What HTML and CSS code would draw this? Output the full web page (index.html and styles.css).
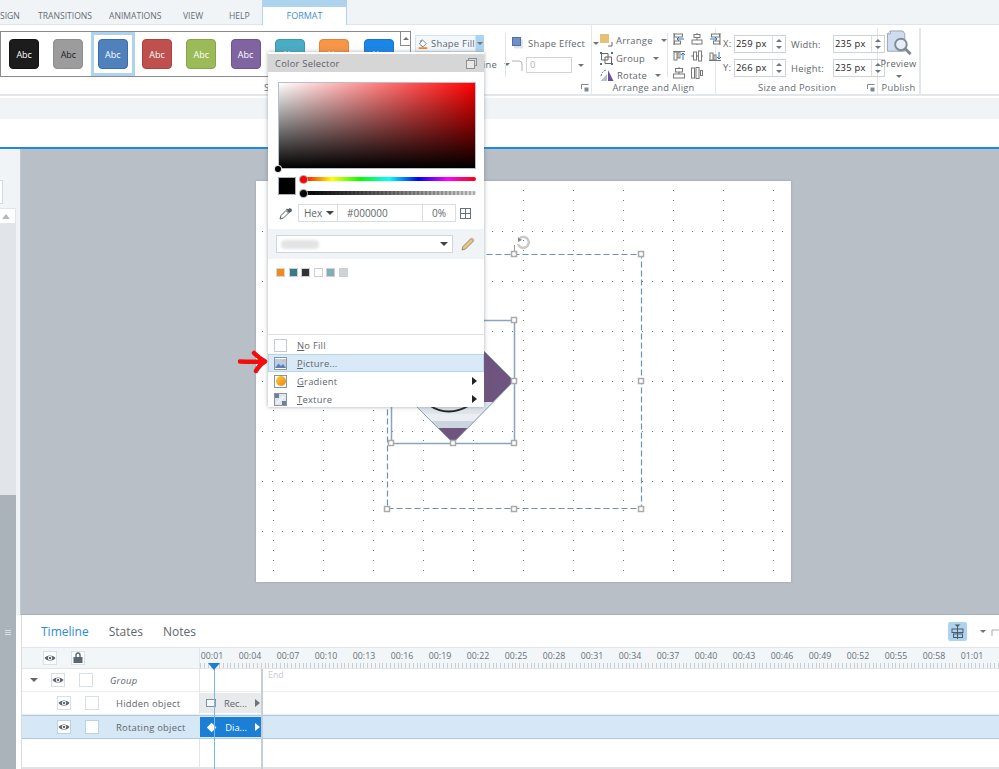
FILE: index.html
```html
<!DOCTYPE html>
<html lang="en">
<head>
<meta charset="utf-8">
<title>Format ribbon with Color Selector</title>
<link rel="stylesheet" href="styles.css">
</head>
<body>
<svg class="defs" width="0" height="0" aria-hidden="true">
  <defs>
    <symbol id="eye" viewBox="0 0 12 12"><path d="M0.5 6C2.5 2.6 9.5 2.6 11.5 6C9.5 9.4 2.5 9.4 0.5 6Z" fill="#5b6670"/><circle cx="6" cy="6" r="2.2" fill="#fff"/><circle cx="6" cy="6" r="1.2" fill="#5b6670"/></symbol>
    <symbol id="launcher" viewBox="0 0 8 8"><path d="M0.5 5V0.5H7.5" fill="none" stroke="#888"/><rect x="3.5" y="3.5" width="4" height="4" fill="#7d8a96"/></symbol>
  </defs>
</svg>
<div class="app">
  <nav class="tabs">
    <span class="tab tab-sign">SIGN</span>
    <span class="tab tab-trans">TRANSITIONS</span>
    <span class="tab tab-anim">ANIMATIONS</span>
    <span class="tab tab-view">VIEW</span>
    <span class="tab tab-help">HELP</span>
    <span class="tab tab-format">FORMAT</span>
  </nav>

  <section class="ribbon">
    <div class="group g-styles">
      <div class="group-body">
        <div class="gallery">
          <div class="style-item"><span class="chip c-black">Abc</span></div>
          <div class="style-item"><span class="chip c-gray">Abc</span></div>
          <div class="style-item selected"><span class="chip c-blue">Abc</span></div>
          <div class="style-item"><span class="chip c-red">Abc</span></div>
          <div class="style-item"><span class="chip c-green">Abc</span></div>
          <div class="style-item"><span class="chip c-purple">Abc</span></div>
          <div class="style-item"><span class="chip c-teal">Abc</span></div>
          <div class="style-item"><span class="chip c-orange">Abc</span></div>
          <div class="style-item"><span class="chip c-azure">Abc</span></div>
          <div class="gallery-scroll"><span class="caret-up"></span></div>
        </div>
        <div class="fill-col">
          <div class="fill-row">
            <div class="fill-btn">
              <svg width="14" height="14" viewBox="0 0 14 14"><path d="M6 1L11.5 6.5L7 11L2 7Z" fill="#fff" stroke="#555"/><path d="M4 4V1.5" stroke="#555"/><rect x="1" y="11.5" width="12" height="2.5" fill="#f08a32"/></svg>
              <span>Shape Fill</span>
            </div>
            <div class="fill-drop"><span class="caret"></span></div>
          </div>
          <div class="outline-row"><span>Shape Outline</span><span class="caret"></span></div>
        </div>
        <div class="vsep"></div>
        <div class="effect-col">
          <div class="effect-row">
            <svg width="11" height="12" viewBox="0 0 11 12"><rect x="2" y="2.5" width="9" height="9" fill="#dfe3e8"/><rect x="0.5" y="0.5" width="8" height="8" fill="#6f8fc9" stroke="#52709f"/></svg>
            <span>Shape Effect</span><span class="caret"></span>
          </div>
          <div class="corner-row">
            <svg width="11" height="11" viewBox="0 0 11 11"><path d="M0 1H7Q10 1 10 4V11" fill="none" stroke="#aeb4ba"/></svg>
            <div class="corner-input">0</div><span class="caret"></span>
          </div>
        </div>
      </div>
      <div class="group-label label-styles"><span>Shape Styles</span><svg class="launcher" width="8" height="8"><use href="#launcher"/></svg></div>
    </div>

    <div class="group g-arrange">
      <div class="group-body">
        <div class="arrange-col">
          <div class="arrange-row">
            <svg width="13" height="13" viewBox="0 0 13 13"><rect x="0" y="0" width="9" height="9" fill="#e8bf78"/><path d="M8 12H12V8" fill="none" stroke="#666"/></svg>
            <span>Arrange</span><span class="caret"></span>
          </div>
          <div class="arrange-row">
            <svg width="13" height="13" viewBox="0 0 13 13"><g fill="#4a6fa5"><rect x="0" y="0" width="2" height="2"/><rect x="11" y="0" width="2" height="2"/><rect x="0" y="11" width="2" height="2"/><rect x="11" y="11" width="2" height="2"/></g><path d="M1.5 1.5H8V8H1.5ZM5 5H11.5V11.5H5Z" fill="none" stroke="#666"/></svg>
            <span>Group</span><span class="caret"></span>
          </div>
          <div class="arrange-row">
            <svg width="14" height="13" viewBox="0 0 14 13"><path d="M8 1L13.5 12H8Z" fill="#6b4f9e"/><path d="M7 12H0.5L7 5Z" fill="#b9bfd2"/><path d="M1 7Q2 2 6 1" fill="none" stroke="#3f78c4" stroke-dasharray="2 1"/></svg>
            <span>Rotate</span><span class="caret"></span>
          </div>
        </div>
        <div class="vsep vsep-align"></div>
        <div class="align-grid">
          <svg width="12" height="12" viewBox="0 0 12 12"><path d="M1 0V12" stroke="#777"/><rect x="1.5" y="1" width="8" height="3" fill="#fff" stroke="#777"/><rect x="1.5" y="8" width="6" height="3" fill="#fff" stroke="#777"/><path d="M11 6H4M6 4L4 6L6 8" fill="none" stroke="#2a76c6"/></svg>
          <svg width="12" height="12" viewBox="0 0 12 12"><path d="M6 0V12" stroke="#777"/><rect x="3" y="1.5" width="6" height="3" fill="#fff" stroke="#777"/><rect x="1" y="7" width="10" height="4" fill="#fff" stroke="#777"/></svg>
          <svg width="12" height="12" viewBox="0 0 12 12"><path d="M11 0V12" stroke="#777"/><rect x="2.5" y="1" width="8" height="3" fill="#fff" stroke="#777"/><rect x="4.5" y="8" width="6" height="3" fill="#fff" stroke="#777"/><path d="M1 6H8M6 4L8 6L6 8" fill="none" stroke="#2a76c6"/></svg>
          <svg width="12" height="12" viewBox="0 0 12 12"><path d="M0 1.5H12" stroke="#777"/><rect x="1" y="2" width="3" height="8" fill="#fff" stroke="#777"/><rect x="5" y="2" width="2" height="6" fill="#fff" stroke="#777"/><path d="M10 10V3M8 5L10 3L12 5" fill="none" stroke="#2a76c6"/></svg>
          <svg width="12" height="12" viewBox="0 0 12 12"><path d="M0 6H12" stroke="#777"/><rect x="2.5" y="2" width="3" height="8" fill="#fff" stroke="#777"/><rect x="7.5" y="1" width="3" height="10" fill="#fff" stroke="#777"/></svg>
          <svg width="12" height="12" viewBox="0 0 12 12"><path d="M0 10.5H12" stroke="#777"/><rect x="1" y="3" width="3" height="7" fill="#fff" stroke="#777"/><rect x="5" y="5" width="2" height="5" fill="#fff" stroke="#777"/><path d="M10 2V9M8 7L10 9L12 7" fill="none" stroke="#2a76c6"/></svg>
          <svg width="12" height="12" viewBox="0 0 12 12"><path d="M6 0V2M6 5V7" stroke="#777"/><rect x="2.5" y="1.5" width="7" height="3.5" fill="#fff" stroke="#777"/><rect x="0.5" y="7" width="11" height="4" fill="#fff" stroke="#777"/></svg>
          <svg width="12" height="12" viewBox="0 0 12 12"><rect x="0.5" y="1" width="3" height="10" fill="#fff" stroke="#777"/><rect x="5" y="0.5" width="3" height="11" fill="#fff" stroke="#777"/><rect x="9.5" y="3.5" width="2" height="5" fill="#fff" stroke="#777"/></svg>
        </div>
      </div>
      <div class="group-label">Arrange and Align</div>
    </div>

    <div class="group g-size">
      <div class="group-body size-grid">
        <span class="size-label size-x">X:</span>
        <div class="spin"><span class="spin-value">259 px</span><span class="spin-arrows"><span class="caret-up"></span><span class="caret"></span></span></div>
        <span class="size-label size-w">Width:</span>
        <div class="spin"><span class="spin-value">235 px</span><span class="spin-arrows"><span class="caret-up"></span><span class="caret"></span></span></div>
        <span class="size-label size-x">Y:</span>
        <div class="spin"><span class="spin-value">266 px</span><span class="spin-arrows"><span class="caret-up"></span><span class="caret"></span></span></div>
        <span class="size-label size-w">Height:</span>
        <div class="spin"><span class="spin-value">235 px</span><span class="spin-arrows"><span class="caret-up"></span><span class="caret"></span></span></div>
      </div>
      <div class="group-label label-size"><span>Size and Position</span><svg class="launcher" width="8" height="8"><use href="#launcher"/></svg></div>
    </div>

    <div class="group g-publish">
      <div class="group-body preview">
        <svg width="26" height="28" viewBox="0 0 26 28"><path d="M4 1H17L19 4V22H1V4Z" fill="#cfdcf0" stroke="#9aa3ad"/><path d="M4 1V4H1" fill="#fff" stroke="#9aa3ad"/><circle cx="15" cy="15" r="6" fill="#e6eef8" stroke="#7e8a96" stroke-width="2"/><path d="M19.5 19.5L25 25" stroke="#7e8a96" stroke-width="3"/></svg>
        <span class="preview-text">Preview</span>
        <span class="caret"></span>
      </div>
      <div class="group-label">Publish</div>
    </div>
  </section>

  <div class="subbar"></div>
  <div class="whitebar"></div>

  <main class="workspace">
    <aside class="side">
      <div class="side-top"><div class="side-field"></div></div>
      <div class="side-scroll"><span class="caret-up"></span></div>
      <div class="side-track"></div>
      <div class="side-dark"></div>
    </aside>
    <div class="canvas">
      <div class="stage">
        <svg class="stage-art" viewBox="256 181 535 401" width="535" height="401">
          <defs>
            <pattern id="grid" x="262" y="190" width="50" height="50" patternUnits="userSpaceOnUse">
              <g fill="#777">
                <rect x="11" y="0" width="1" height="1"/><rect x="11" y="10" width="1" height="1"/><rect x="11" y="20" width="1" height="1"/><rect x="11" y="30" width="1" height="1"/>
                <rect x="0" y="41" width="1" height="1"/><rect x="10" y="41" width="1" height="1"/><rect x="20" y="41" width="1" height="1"/><rect x="30" y="41" width="1" height="1"/><rect x="40" y="41" width="1" height="1"/>
              </g>
            </pattern>
            <clipPath id="diamond"><polygon points="453,320 514,381 453,443 391,381"/></clipPath>
          </defs>
          <rect x="262" y="190" width="523" height="384" fill="url(#grid)"/>
          <polygon points="453,320 514,381 453,443 391,381" fill="#6f5480"/>
          <g clip-path="url(#diamond)">
            <rect x="391" y="402" width="123" height="12" fill="#dfe5eb"/>
            <rect x="391" y="414" width="123" height="7" fill="#eaeef2"/>
            <rect x="391" y="421" width="123" height="7" fill="#ccd5de"/>
          </g>
          <path d="M429 405Q448 418 470 405" fill="none" stroke="#222" stroke-width="2"/>
          <polygon points="453,320 514,381 453,443 391,381" fill="none" stroke="#8aa3c0"/>
          <rect x="391.5" y="320.5" width="123" height="123" fill="none" stroke="#8aa3c0" stroke-width="1.5"/>
          <rect x="387.5" y="254.5" width="254" height="254" fill="none" stroke="#6f8fb3" stroke-width="1.2" stroke-dasharray="6 3"/>
          <path d="M514.5 254V245" stroke="#999"/>
          <path d="M518 244A5.5 5.5 0 1 0 520 238" fill="none" stroke="#c9c9c9" stroke-width="2.4"/>
          <path d="M518 237L522 240L518 242Z" fill="#888"/>
          <g fill="#fff" stroke="#aaa" stroke-width="1.5">
            <rect x="511.5" y="251.5" width="5" height="5"/><rect x="638.5" y="251.5" width="5" height="5"/>
            <rect x="638.5" y="378.5" width="5" height="5"/><rect x="384.5" y="506.5" width="5" height="5"/>
            <rect x="511.5" y="506.5" width="5" height="5"/><rect x="638.5" y="506.5" width="5" height="5"/>
            <rect x="511.5" y="317.5" width="5" height="5"/><rect x="511.5" y="378.5" width="5" height="5"/>
            <rect x="388.5" y="440.5" width="5" height="5"/><rect x="450.5" y="440.5" width="5" height="5"/><rect x="511.5" y="440.5" width="5" height="5"/>
          </g>
        </svg>
      </div>
    </div>
  </main>

  <section class="bottom">
    <div class="bottom-grip"><span></span><span></span><span></span></div>
    <div class="timeline">
      <div class="tl-tabs">
        <span class="tl-tab active">Timeline</span>
        <span class="tl-tab">States</span>
        <span class="tl-tab">Notes</span>
        <div class="tl-tools">
          <div class="tl-toggle"><svg width="13" height="16" viewBox="0 0 13 16"><path d="M6.5 2V15" stroke="#4b5a68"/><path d="M3.5 0.5H9.5L6.5 3Z" fill="#4b5a68"/><rect x="1" y="5" width="11" height="3.5" fill="none" stroke="#4b5a68"/><rect x="2.5" y="10" width="9" height="3.5" fill="none" stroke="#4b5a68"/></svg></div>
          <span class="caret tl-caret"></span>
          <svg class="tl-lock" width="8" height="10" viewBox="0 0 8 10"><path d="M1 9V3H8" fill="none" stroke="#aaa"/></svg>
        </div>
      </div>
      <div class="tl-head">
        <div class="tl-left tl-head-left">
          <span class="sq-btn"><svg width="12" height="12"><use href="#eye"/></svg></span>
          <span class="sq-btn"><svg width="12" height="12" viewBox="0 0 12 12"><path d="M4 5V3A2 2 0 0 1 8 3V5" fill="none" stroke="#5b6670" stroke-width="1.4"/><rect x="1.5" y="5" width="9" height="6" fill="#5b6670"/></svg></span>
        </div>
        <div class="ruler">
          <div class="ruler-labels">
            <span>00:01</span><span>00:04</span><span>00:07</span><span>00:10</span><span>00:13</span><span>00:16</span><span>00:19</span><span>00:22</span><span>00:25</span><span>00:28</span><span>00:31</span><span>00:34</span><span>00:37</span><span>00:40</span><span>00:43</span><span>00:46</span><span>00:49</span><span>00:52</span><span>00:55</span><span>00:58</span><span>01:01</span>
          </div>
          <div class="ruler-ticks"></div>
        </div>
      </div>
      <div class="tl-row">
        <div class="tl-left">
          <span class="twisty"></span>
          <span class="sq-btn"><svg width="12" height="12"><use href="#eye"/></svg></span>
          <span class="sq-btn"></span>
          <span class="tl-name group-name">Group</span>
        </div>
        <div class="tl-track"><span class="end-label">End</span></div>
      </div>
      <div class="tl-row">
        <div class="tl-left tl-indent">
          <span class="sq-btn"><svg width="12" height="12"><use href="#eye"/></svg></span>
          <span class="sq-btn"></span>
          <span class="tl-name">Hidden object</span>
        </div>
        <div class="tl-track">
          <div class="clip clip-rect">
            <svg width="13" height="10" viewBox="0 0 13 10"><rect x="0.5" y="0.5" width="12" height="9" fill="#f6f8fa" stroke="#5f7896"/></svg>
            <span>Rec...</span><span class="caret-right"></span>
          </div>
        </div>
      </div>
      <div class="tl-row tl-row-active">
        <div class="tl-left tl-indent">
          <span class="sq-btn"><svg width="12" height="12"><use href="#eye"/></svg></span>
          <span class="sq-btn"></span>
          <span class="tl-name">Rotating object</span>
        </div>
        <div class="tl-track">
          <div class="clip clip-dia">
            <svg width="13" height="13" viewBox="0 0 13 13"><polygon points="6.5,1 12,6.5 6.5,12 1,6.5" fill="#fff"/></svg>
            <span>Dia...</span><span class="caret-right"></span>
          </div>
        </div>
      </div>
      <div class="tl-rest"><div class="tl-left"></div></div>
      <div class="playhead"><span class="play-tri"></span></div>
      <div class="endline"></div>
    </div>
  </section>

  <div class="popup">
    <header class="popup-head">
      <span>Color Selector</span>
      <svg width="11" height="11" viewBox="0 0 11 11"><rect x="2.5" y="0.5" width="8" height="7" fill="none" stroke="#8a8f94"/><rect x="0.5" y="2.5" width="8" height="8" fill="#e8e8e8" stroke="#8a8f94"/></svg>
    </header>
    <div class="picker">
      <div class="sv-box"><span class="sv-thumb"></span></div>
      <div class="sliders">
        <div class="current"></div>
        <div class="slider-col">
          <div class="hue"><span class="thumb thumb-red"></span></div>
          <div class="alpha"><span class="thumb thumb-black"></span></div>
        </div>
      </div>
      <div class="value-row">
        <svg width="13" height="13" viewBox="0 0 13 13"><path d="M1 12L2 8.5L7 3.5L9.5 6L4.5 11Z" fill="#fff" stroke="#56606a"/><path d="M7.5 2L11 5.5M8.5 4L10.5 2A1.4 1.4 0 0 1 12 4L10 5.5" fill="#56606a" stroke="#56606a" stroke-width="1.4"/></svg>
        <div class="value-fields">
          <span class="vf vf-mode">Hex<span class="caret dark"></span></span>
          <span class="vf vf-hex">#000000</span>
          <span class="vf vf-pct">0%</span>
        </div>
        <svg width="11" height="11" viewBox="0 0 11 11"><rect x="0.5" y="0.5" width="10" height="10" fill="none" stroke="#66707a"/><path d="M5.5 0V11M0 5.5H11" stroke="#66707a"/></svg>
      </div>
    </div>
    <div class="palette-bar">
      <div class="palette-select"><span class="smudge"></span><span class="caret dark"></span></div>
      <svg width="14" height="14" viewBox="0 0 14 14"><path d="M1 13L2 9.5L10 1.5L12.5 4L4.5 12Z" fill="#e9c873" stroke="#8f8a7a"/><path d="M10 1.5L12.5 4L13.5 3L11 0.5Z" fill="#e79aa0"/></svg>
    </div>
    <div class="swatches">
      <span class="sw sw-orange"></span><span class="sw sw-teal"></span><span class="sw sw-dark"></span><span class="sw sw-white"></span><span class="sw sw-sea"></span><span class="sw sw-gray"></span>
    </div>
    <ul class="menu">
      <li class="menu-item"><span class="mi-icon"></span><span><u>N</u>o Fill</span></li>
      <li class="menu-item hover"><span class="mi-icon"><svg width="11" height="9" viewBox="0 0 11 9"><rect width="11" height="9" fill="#b6cdeb"/><path d="M0 9L3.5 4.5L6 7L8 5L11 9Z" fill="#5d7fb8"/><circle cx="8.5" cy="2" r="1" fill="#f2c14e"/></svg></span><span><u>P</u>icture...</span></li>
      <li class="menu-item"><span class="mi-icon"><span class="grad-dot"></span></span><span><u>G</u>radient</span><span class="caret-right black"></span></li>
      <li class="menu-item"><span class="mi-icon"><svg width="11" height="11" viewBox="0 0 11 11"><rect width="11" height="11" fill="#dfe6ee"/><path d="M0 0H4V4H0ZM7 7H11V11H7Z" fill="#6a8099"/><path d="M2 9L9 2" stroke="#fff" stroke-width="2" stroke-dasharray="1 1"/></svg></span><span><u>T</u>exture</span><span class="caret-right black"></span></li>
    </ul>
  </div>

  <svg class="red-arrow" width="30" height="24" viewBox="0 0 30 24" aria-hidden="true"><path d="M2 11.5C10 12 18 12 27 11.5M16 3C19 6 23 9 27 11.5C23 14 20 17 18 21" fill="none" stroke="#f20d0d" stroke-width="4.5" stroke-linecap="round" stroke-linejoin="round"/></svg>
</div>
</body>
</html>
```
FILE: styles.css
```css
* { box-sizing: border-box; }
html, body { margin: 0; padding: 0; }
body { font-family: "Open Sans", "Noto Sans", sans-serif; color: #5f666c; background: #fff; overflow: hidden; }
ul { list-style: none; margin: 0; padding: 0; }
.defs { position: absolute; }
.app { position: relative; width: 999px; height: 769px; overflow: hidden; display: flex; flex-direction: column; }

/* carets */
.caret, .caret-up, .caret-right { display: inline-block; width: 0; height: 0; flex: none; }
.caret { border-left: 3px solid transparent; border-right: 3px solid transparent; border-top: 3px solid #6d747a; }
.caret.dark { border-top-color: #444; border-left-width: 4px; border-right-width: 4px; border-top-width: 4px; }
.caret-up { border-left: 3px solid transparent; border-right: 3px solid transparent; border-bottom: 3px solid #6d747a; }
.caret-right { border-top: 4px solid transparent; border-bottom: 4px solid transparent; border-left: 5px solid #6d747a; }
.caret-right.black { border-left-color: #222; }

/* tabs */
.tabs { height: 25px; background: #f0f4f7; display: flex; font-size: 8.6px; border-bottom: 1px solid #e0e4e8; flex: none; }
.tab { display: block; line-height: 32px; height: 24px; color: #666c72; white-space: nowrap; overflow: hidden; }
.tab-sign { width: 38px; }
.tab-trans { width: 71px; }
.tab-anim { width: 74px; }
.tab-view { width: 46px; }
.tab-help { width: 33px; }
.tab-format { width: 85px; height: 25px; background: #fff; color: #3b8fd9; text-align: center; border: 1px solid #aed3ef; border-top: 7px solid #aed3ef; border-bottom: 0; line-height: 18px; font-size: 9px; }

/* ribbon */
.ribbon { height: 71px; background: #fff; display: flex; border-bottom: 2px solid #e4e7ea; flex: none; }
.group { display: flex; flex-direction: column; border-right: 1px solid #e4e7ea; height: 68px; margin-top: 3px; }
.group-body { height: 50px; display: flex; }
.group-label { font-size: 9.4px; line-height: 12px; text-align: center; margin-top: 4px; letter-spacing: 0.25px; white-space: nowrap; color: #666c72; }
.launcher { display: block; }
.g-styles { width: 592px; margin-top: 0; height: 71px; }
.g-styles .group-body { height: 53px; }
.g-arrange { width: 124px; }
.g-size { width: 162px; }
.g-publish { width: 43px; border-right: 2px solid #e4e7ea; }
.label-styles { display: flex; justify-content: space-between; align-items: center; padding: 0 2px 0 264px; }
.label-size { display: flex; justify-content: space-between; align-items: center; padding: 0 2px 0 42px; }

.gallery { margin-top: 6px; width: 411px; height: 46px; border: 1px solid #8a8a8a; display: flex; padding-left: 1px; flex: none; position: relative; }
.style-item { width: 44.3px; height: 44px; display: flex; align-items: center; justify-content: center; flex: none; }
.style-item.selected { border: 3px solid #aed3ef; }
.chip { width: 30px; height: 30px; border-radius: 4px; font-size: 9px; display: flex; align-items: center; justify-content: center; color: #fff; }
.c-black { background: #1c1c1c; border: 1px solid #111; }
.c-gray { background: #9c9c9c; border: 1px solid #8e8e8e; color: #222; }
.c-blue { background: #4f81bd; border: 1px solid #3d6ca6; }
.c-red { background: #c0504d; border: 1px solid #a94441; }
.c-green { background: #9bbb59; border: 1px solid #86a548; }
.c-purple { background: #8064a2; border: 1px solid #6d5491; }
.c-teal { background: #4bacc6; border: 1px solid #3f99b1; }
.c-orange { background: #f79646; border: 1px solid #e2843a; }
.c-azure { background: #1a86e8; border: 1px solid #1574cc; }
.gallery-scroll { position: absolute; right: 0; top: 0; width: 10px; height: 14px; display: flex; align-items: center; justify-content: center; border-left: 1px solid #8a8a8a; border-bottom: 1px solid #8a8a8a; background: #fff; }

.fill-col { width: 90px; margin-left: 4px; flex: none; font-size: 9.4px; letter-spacing: 0.25px; }
.fill-row { display: flex; margin-top: 10px; height: 17px; }
.fill-btn { width: 61px; background: #f3f8fc; border: 1px solid #cfe3f3; display: flex; align-items: center; gap: 3px; padding-left: 2px; white-space: nowrap; }
.fill-drop { width: 8px; background: #aed3ef; display: flex; align-items: center; justify-content: center; }
.outline-row { margin-top: 4px; padding-left: 17px; display: flex; align-items: center; gap: 7px; white-space: nowrap; height: 17px; }
.vsep { width: 1px; height: 44px; background: #e0e4e8; margin-top: 8px; flex: none; }
.effect-col { margin-left: 6px; font-size: 9.4px; letter-spacing: 0.25px; white-space: nowrap; }
.effect-row { display: flex; align-items: center; margin-top: 11px; height: 14px; gap: 5px; }
.effect-row .caret { margin-left: 3px; }
.corner-row { display: flex; align-items: center; margin-top: 7px; gap: 3px; color: #b0b4b8; }
.corner-input { width: 46px; height: 16px; border: 1px solid #d0d4d8; line-height: 14px; padding-left: 3px; margin-right: 3px; }

.arrange-col { width: 67px; margin-left: 8px; margin-top: 4px; font-size: 9.4px; letter-spacing: 0.25px; }
.arrange-row { height: 17.5px; display: flex; align-items: center; gap: 3px; white-space: nowrap; }
.arrange-row .caret { margin-left: 5px; }
.vsep-align { margin-left: 0; margin-top: 5px; }
.align-grid { margin-left: 5px; margin-top: 5px; display: grid; grid-template-columns: repeat(3, 18px); grid-auto-rows: 17px; }

.size-grid { display: grid; grid-template-columns: 18px 52px 47px 44px; grid-auto-rows: 24px; padding-top: 7px; height: 50px; align-items: start; }
.size-label { font-size: 9.4px; line-height: 18px; letter-spacing: 0.25px; white-space: nowrap; }
.size-x { padding-left: 7px; }
.size-w { padding-left: 5px; line-height: 20px; }
.spin { width: 52px; height: 18px; border: 1px solid #cdd2d6; display: flex; margin-top: 0; }
.spin-value { flex: 1; font-size: 9.4px; line-height: 16px; color: #222; padding-left: 1px; white-space: nowrap; letter-spacing: 0.25px; }
.spin-arrows { width: 13px; border-left: 1px solid #dde0e3; display: flex; flex-direction: column; align-items: center; justify-content: space-evenly; }

.preview { flex-direction: column; align-items: center; padding-top: 2px; }
.preview-text { font-size: 9.4px; line-height: 12px; margin-top: 1px; letter-spacing: 0.25px; }
.preview .caret { margin-top: 5px; }

.subbar { height: 21px; background: #f0f4f7; margin-top: 2px; flex: none; }
.whitebar { height: 30px; background: #fff; border-bottom: 2px solid #1e88e5; flex: none; }

/* workspace */
.workspace { height: 466px; display: flex; flex: none; background: #b8bfc6; }
.side { width: 21px; display: flex; flex-direction: column; flex: none; background: #f0f4f7; border-right: 1px solid #c3c8cd; padding-right: 4px; }
.side-top { height: 59px; padding-top: 31px; }
.side-field { height: 24px; width: 3px; background: #fff; border: 1px solid #d4d8dc; border-left: 0; }
.side-scroll { height: 16px; background: #fff; border: 1px solid #e3e6e9; border-left: 0; display: flex; align-items: center; justify-content: flex-end; padding-right: 5px; }
.side-scroll .caret-up { border-left-width: 4px; border-right-width: 4px; border-bottom: 5px solid #b3bac1; }
.side-track { height: 271px; background: #e1e5e9; }
.side-dark { flex: 1; background: #aab2ba; }
.canvas { flex: 1; padding: 32px 0 0 235px; border-bottom: 1px solid #a9b1ba; }
.stage { width: 535px; height: 401px; background: #fff; box-shadow: 0 0 2px rgba(120, 130, 140, 0.6); }
.stage-art { display: block; }

/* bottom */
.bottom { flex: 1; display: flex; min-height: 0; }
.bottom-grip { width: 16px; background: #aab2ba; display: flex; flex-direction: column; align-items: center; gap: 1px; padding-top: 15px; flex: none; }
.bottom-grip span { width: 6px; height: 1px; background: #d8dde1; }
.timeline { flex: 1; margin-left: 5px; border-left: 1px solid #d8dce0; position: relative; display: flex; flex-direction: column; min-width: 0; font-size: 9.4px; }
.tl-tabs { height: 33px; display: flex; align-items: center; gap: 20px; padding-left: 19px; font-size: 12px; flex: none; border-bottom: 1px solid #e2e6ea; }
.tl-tab { line-height: 33px; }
.tl-tab.active { color: #2b8ae0; }
.tl-tools { position: absolute; top: 7px; right: 0; display: flex; align-items: center; height: 19px; }
.tl-toggle { width: 19px; height: 19px; background: #aed3ef; border-radius: 2px; display: flex; align-items: center; justify-content: center; }
.tl-caret { margin-left: 13px; }
.tl-lock { margin-left: 5px; }
.tl-head { height: 21px; background: #f3f6f8; display: flex; flex: none; border-bottom: 1px solid #e2e6ea; }
.tl-left { width: 178px; display: flex; align-items: center; gap: 14px; padding-left: 21px; flex: none; border-right: 1px solid #e2e6ea; height: 100%; }
.tl-head-left { gap: 14px; }
.sq-btn { width: 14px; height: 14px; background: #fff; border: 1px solid #d8dfe6; display: flex; align-items: center; justify-content: center; flex: none; }
.ruler { flex: 1; position: relative; overflow: hidden; }
.ruler-labels { display: flex; margin-left: -7px; height: 14px; }
.ruler-labels span { width: 38px; flex: none; text-align: center; font-size: 8.8px; line-height: 17px; color: #667078; }
.ruler-ticks { position: absolute; left: 0; right: 0; bottom: 0; height: 5px; background: repeating-linear-gradient(to right, #c6cdd3 0, #c6cdd3 1px, transparent 1px, transparent 3.8px); }
.tl-row { height: 23px; display: flex; flex: none; border-bottom: 1px solid #eceef0; }
.twisty { width: 0; height: 0; border-left: 4px solid transparent; border-right: 4px solid transparent; border-top: 4px solid #5f666c; margin-left: -13px; margin-right: -1px; }
.tl-name { margin-left: 3px; font-size: 9.4px; letter-spacing: 0.25px; white-space: nowrap; margin-left: 3px; }
.group-name { font-style: italic; }
.tl-indent { padding-left: 35px; }
.tl-indent .tl-name { margin-left: 3px; }
.tl-track { flex: 1; position: relative; display: flex; align-items: center; }
.end-label { position: absolute; left: 68px; top: -1px; color: #c6cbd0; font-size: 8.8px; line-height: 14px; }
.clip { width: 62px; height: 20px; display: flex; align-items: center; white-space: nowrap; font-size: 9.4px; padding-left: 6px; gap: 8px; }
.clip-rect { background: #e8eaec; }
.clip-dia { background: #1b7fd6; color: #fff; }
.clip .caret-right { margin-left: auto; margin-right: 2px; }
.clip-dia .caret-right { border-left-color: #fff; }
.tl-row-active { background: #d6e7f6; border-top: 1px solid #a9cbe6; border-bottom: 1px solid #a9cbe6; height: 24px; }
.tl-row-active .tl-left { border-right-color: #d6e7f6; }
.tl-row-active .sq-btn { border-color: #b7d3ea; }
.tl-rest { flex: 1; border-bottom: 2px solid #dfe3e7; }
.playhead { position: absolute; left: 192px; top: 48px; bottom: 0; width: 1px; background: #7cb8ea; }
.play-tri { position: absolute; left: -6px; top: 0; width: 0; height: 0; border-left: 6px solid transparent; border-right: 6px solid transparent; border-top: 7px solid #1b7fd6; }
.endline { position: absolute; left: 239px; top: 54px; bottom: 0; width: 2px; background: #c6ced6; }

/* popup */
.popup { position: absolute; left: 268px; top: 52px; width: 216px; height: 355px; background: #fff; box-shadow: 0 0 4px rgba(90, 100, 110, 0.55); display: flex; flex-direction: column; }
.popup-head { height: 18px; margin-top: 2px; background: #d6d6d6; display: flex; align-items: center; justify-content: space-between; padding: 0 7px 0 7px; font-size: 9.4px; letter-spacing: 0.25px; flex: none; color: #5b6268; }
.picker { padding: 10px 8px 0 10px; flex: none; }
.sv-box { width: 198px; height: 87px; position: relative; border: 1px solid #b6c0c8; background: linear-gradient(to top, #000, transparent), linear-gradient(to right, #fff, #f00); }
.sv-thumb { position: absolute; left: -4px; bottom: -4px; width: 6px; height: 6px; border-radius: 50%; background: #000; box-shadow: 0 0 0 1px #ddd; }
.sliders { display: flex; margin-top: 8px; height: 18px; }
.current { width: 18px; height: 18px; background: #000; border: 1px solid #a8b0b8; flex: none; }
.slider-col { margin-left: 7px; width: 173px; display: flex; flex-direction: column; gap: 10px; padding-top: 0; }
.hue { height: 5px; position: relative; border-radius: 3px; background: linear-gradient(to right, #f00, #ff0, #0f0, #0ff, #00f, #f0f, #f00); }
.alpha { height: 5px; position: relative; border-radius: 3px; background: linear-gradient(to right, #000, rgba(0, 0, 0, 0.15)), repeating-linear-gradient(90deg, #fff 0, #fff 2px, #ccc 2px, #ccc 4px); }
.thumb { position: absolute; left: -3px; top: -1px; width: 7px; height: 7px; border-radius: 50%; box-shadow: 0 0 0 1px #aab0b6; }
.thumb-red { background: #f00; }
.thumb-black { background: #000; }
.value-row { display: flex; align-items: center; margin-top: 9px; height: 18px; }
.value-row > svg:first-child { margin-left: 1px; }
.value-fields { display: flex; margin-left: 6px; margin-right: 4px; height: 18px; border: 1px solid #d8dde2; font-size: 10px; }
.vf { display: flex; align-items: center; }
.vf-mode { width: 39px; border-right: 1px solid #d8dde2; padding-left: 5px; justify-content: space-between; padding-right: 3px; }
.vf-hex { width: 85px; border-right: 1px solid #d8dde2; padding-left: 9px; }
.vf-pct { width: 32px; justify-content: center; }
.palette-bar { margin-top: 7px; height: 30px; background: #f0f4f7; display: flex; align-items: center; padding-left: 8px; gap: 8px; flex: none; }
.palette-select { width: 177px; height: 18px; background: #fff; border: 1px solid #d0d5da; display: flex; align-items: center; justify-content: space-between; padding: 0 4px; }
.smudge { width: 38px; height: 9px; background: #e2e3e4; border-radius: 4px; filter: blur(1.5px); }
.swatches { display: flex; gap: 3.6px; padding: 9px 0 0 8px; height: 75px; flex: none; }
.sw { width: 9px; height: 9px; border: 1px solid #ccd0d4; }
.sw-orange { background: #f08a1f; border-color: #d8d8d8; }
.sw-teal { background: #367b87; }
.sw-dark { background: #333; }
.sw-white { background: #fff; }
.sw-sea { background: #82aeb5; }
.sw-gray { background: #ced3d6; }
.menu { border-top: 1px solid #e0e3e6; padding-top: 1px; font-size: 9.4px; letter-spacing: 0.25px; }
.menu-item { height: 18px; display: flex; align-items: center; padding: 0 6px 0 5px; border: 1px solid transparent; margin: 0 0; }
.menu-item > span:nth-child(2) { margin-left: 10px; }
.menu-item .caret-right { margin-left: auto; }
.menu-item.hover { background: #d9e9f6; border-color: #b5d5ee; }
.mi-icon { width: 13px; height: 13px; border: 1px solid #c4cad0; background: #fff; display: flex; align-items: center; justify-content: center; flex: none; }
.hover .mi-icon, .menu-item:nth-child(n+2) .mi-icon { border-color: #8d949b; }
.grad-dot { width: 10px; height: 10px; border-radius: 50%; background: linear-gradient(135deg, #f3d534, #f27a1a); }

.red-arrow { position: absolute; left: 238px; top: 350px; }
```
